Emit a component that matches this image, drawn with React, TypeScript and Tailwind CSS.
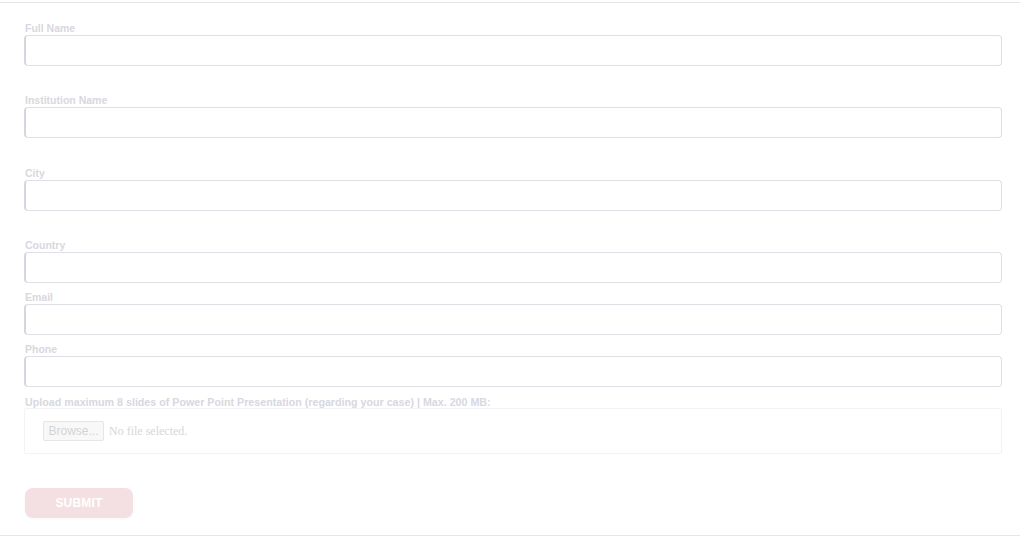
import React from 'react';

const fields = [
  { label: 'Full Name', space: 'mb-[27px]' },
  { label: 'Institution Name', space: 'mb-[28px]' },
  { label: 'City', space: 'mb-[27px]' },
  { label: 'Country', space: 'mb-[7px]' },
  { label: 'Email', space: 'mb-[7px]' },
  { label: 'Phone', space: 'mb-[7px]' },
];

const App: React.FC = () => {
  return (
    <div className="w-[1024px] h-[541px] bg-white" style={{ fontFamily: '"Liberation Sans", Arial, sans-serif' }}>
      <div className="w-[1020px] mt-[2px] border-t border-b border-[#e6e6ea]">
        <form className="pl-[24px] pt-[18px] pb-[17px]" onSubmit={(e) => e.preventDefault()}>
          {fields.map((f) => (
            <div key={f.label} className={f.space}>
              <label className="block h-[14px] leading-[15px] text-[10.5px] font-bold text-[#d8d8e0] pl-[1px]">
                {f.label}
              </label>
              <input
                type="text"
                className="block w-[978px] h-[31px] rounded-[4px] border border-[#dfdfe6] border-l-2 border-l-[#d6d6de] bg-white outline-none"
              />
            </div>
          ))}

          <label className="block h-[14px] leading-[16px] text-[10.7px] font-bold text-[#d8d8e0] pl-[1px]">
            Upload maximum 8 slides of Power Point Presentation (regarding your case) | Max. 200 MB:
          </label>
          <div className="w-[978px] h-[46px] border border-[#f3f3f5] rounded-[2px] flex items-center pl-[18px] gap-[5px]">
            <button
              type="button"
              className="h-[20px] w-[61px] border border-[#e6e6e8] bg-[#f8f8f8] rounded-[2px] text-[12px] text-[#d3d3d6]"
            >
              Browse...
            </button>
            <span className="text-[12px] text-[#d6d6d8]" style={{ fontFamily: '"Liberation Serif", "Times New Roman", serif' }}>
              No file selected.
            </span>
          </div>

          <button
            type="submit"
            className="mt-[34px] ml-[1px] w-[108px] h-[30px] rounded-[8px] bg-[#f4dfe2] text-white text-[12px] font-bold tracking-[0.2px] shadow-[0_1px_3px_rgba(0,0,0,0.04)]"
          >
            SUBMIT
          </button>
        </form>
      </div>
    </div>
  );
};

export default App;
